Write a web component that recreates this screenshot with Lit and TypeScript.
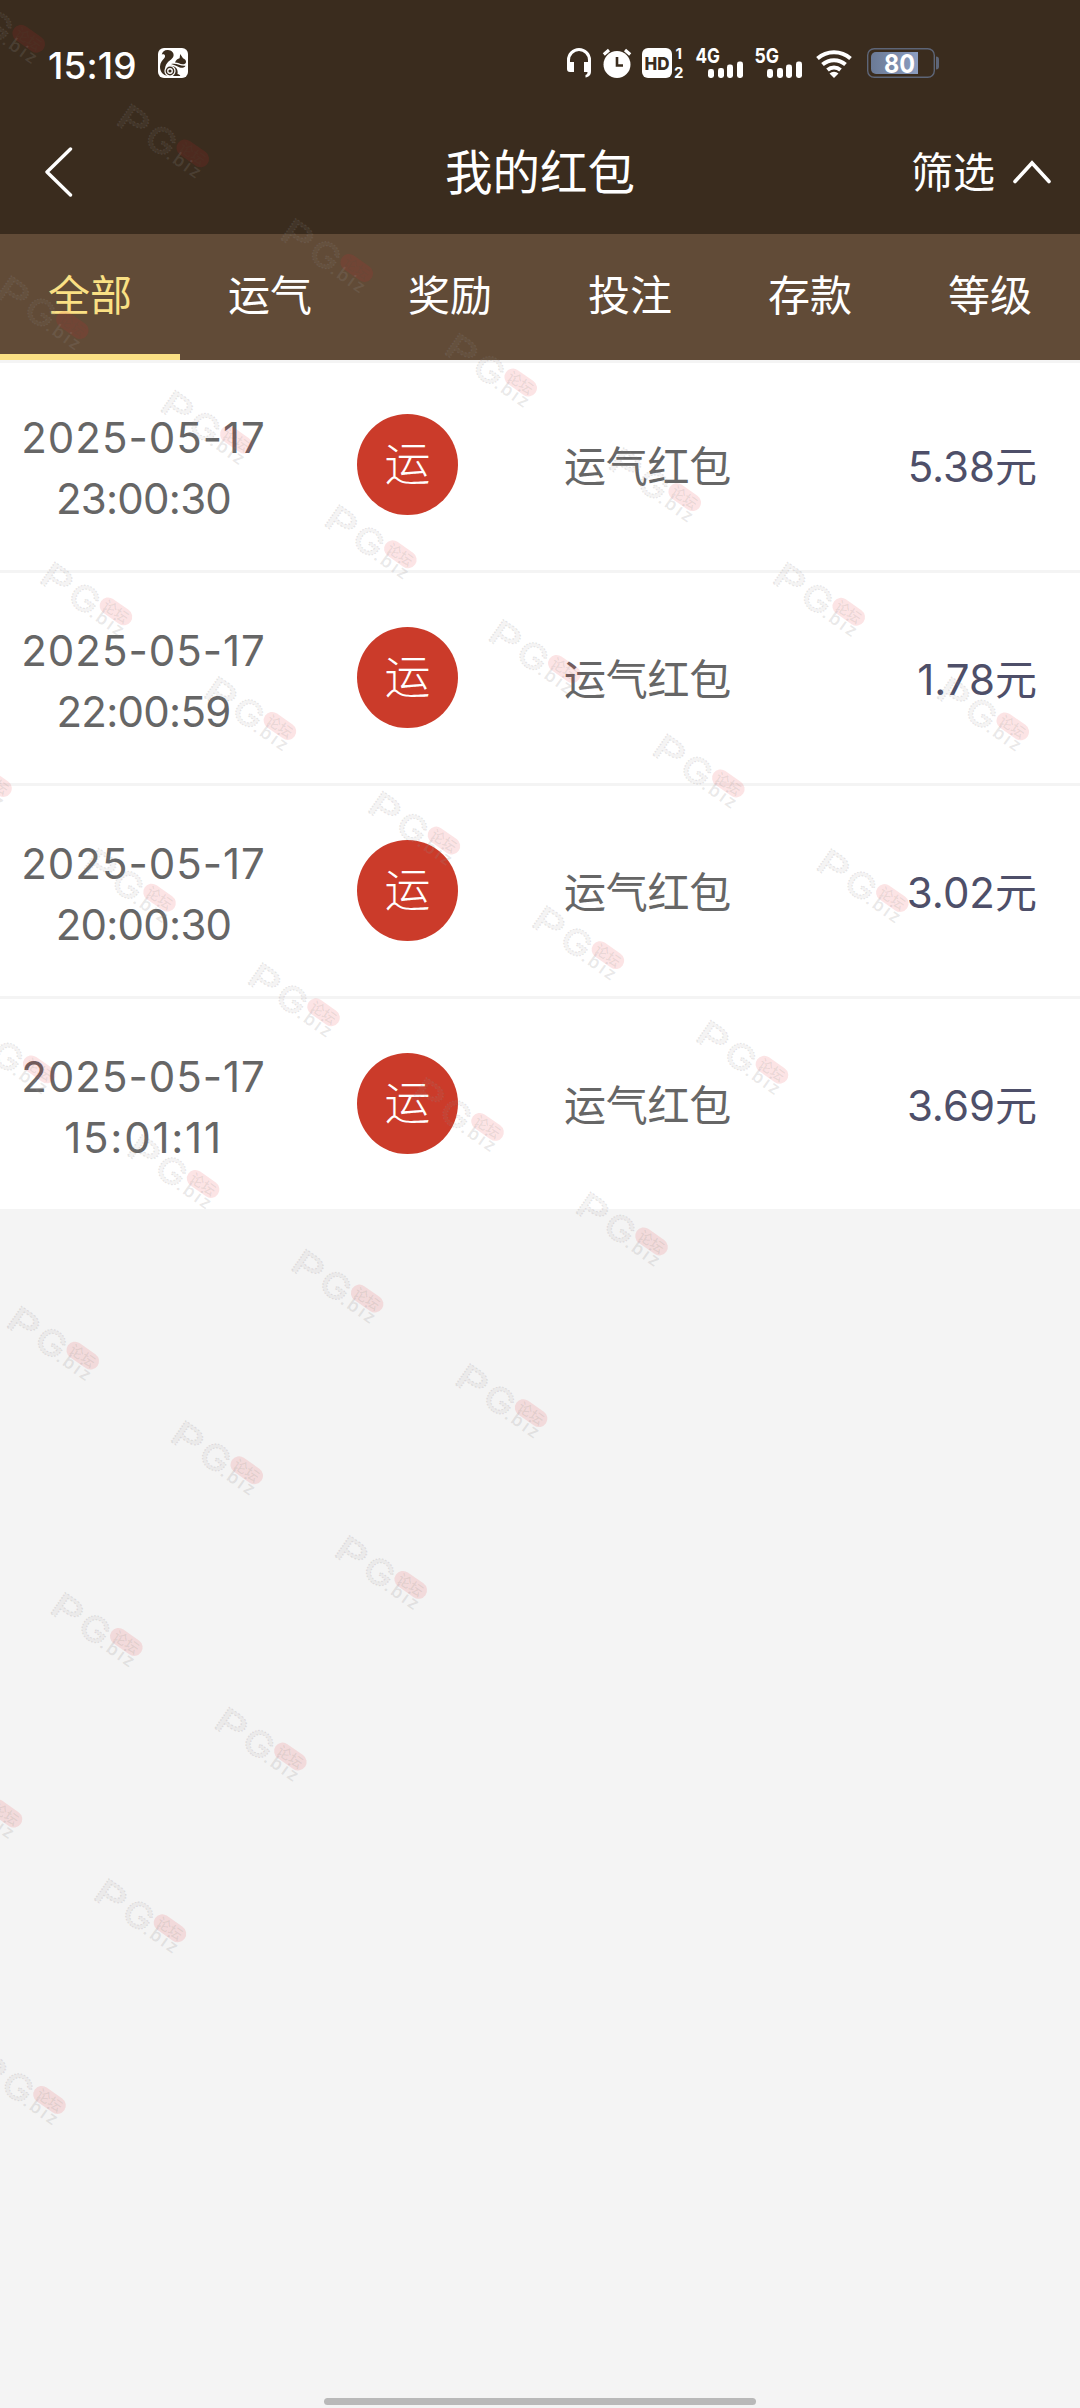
import { LitElement, html, css, svg } from "lit";
import { customElement, property, state } from "lit/decorators.js";
import { classMap } from "lit/directives/class-map.js";
import { styleMap } from "lit/directives/style-map.js";

interface Packet {
  date: string;
  time: string;
  tag: string;
  name: string;
  amount: string;
}

const FONT = css`Inter, "Noto Sans CJK SC", sans-serif`;

/** Opens up the spacing of strings with many narrow "1" digits. */
const tracking = (text: string, base: number) => {
  const ones = text.split("1").length - 1;
  return styleMap({ letterSpacing: `${(base + ones * 0.62).toFixed(2)}px` });
};

@customElement("status-bar")
class StatusBar extends LitElement {
  static styles = css`
    :host { display: flex; align-items: center; height: 126px; color: #fff; font-family: ${FONT}; }
    svg { display: block; flex: none; overflow: visible; }
    .time { width: 91px; margin-left: 48px; font-size: 37px; line-height: 44px; font-weight: 500; letter-spacing: 0.1px; padding-top: 5px; }
    .uc { margin-left: 19px; }
    .right { margin-left: auto; margin-right: 141px; display: flex; }
    .label { font: 700 20.5px Inter, sans-serif; fill: #fff; }
    .small { font: 700 15px Inter, sans-serif; fill: #fff; }
    .level { font: 700 26px Inter, sans-serif; fill: #fff; }
    .hd { font: 800 18px Inter, sans-serif; fill: #3a2c1e; }
  `;

  private signal(label: string) {
    return svg`
      <text class="label" x="-0.5" y="15" textLength="24.5" lengthAdjust="spacingAndGlyphs">${label}</text>
      <rect x="12" y="21" width="6" height="9" rx="2.4" fill="#fff"/>
      <rect x="22" y="20" width="6" height="10" rx="2.4" fill="#fff"/>
      <rect x="31" y="16.500" width="6" height="13.500" rx="2.400" fill="#fff"/>
      <rect x="41" y="13.500" width="6" height="16.500" rx="2.400" fill="#fff"/>`;
  }

  render() {
    return html`
      <span class="time">15:19</span>
      <svg class="uc" width="30" height="30" viewBox="0 0 30 30">
        <rect width="30" height="30" rx="6" fill="#fff"/>
        <g fill="#3a2c1e">
          <path d="M3.800 6.500C4.200 3.500 7 1.700 10 2c3.500.3 5.800 2.500 5.600 5.300-.3 3.400-3.600 4.700-6 7.200-2.300 2.500-2.900 5.500-2.200 8.500.4 2 1.400 3.500 2.600 4.800C5 27.500 1.800 23.500 2 18.500c.2-4 2.300-6 4-8 1.200-1.500 1.400-3 .5-3.800-.7-.7-1.800-.6-2.700-.2z"/>
          <path d="M17 14.500c1-2.700 2.800-3.900 4.600-4.300L22.200 6l2.800 4.300c2 .8 3 2.200 3 3.700 0 1.600-1.500 2.300-3.500 2.300-2.800 0-4.200-1.700-7.500-1.700z"/>
          <path d="M13 16c5.500-1.500 9 2.300 14.500 1.700-.8 1.700-2.600 2.300-4.700 2-3-.4-5-2.700-9.800-3.700z"/>
          <path d="M12.500 17.800c5.500 0 8 4.200 7 8.200 1.500.4 2.500 1 2.800 2h-7.800c2.700-2.200 2.700-7.200-2-10.200z"/>
        </g>
        <circle cx="12" cy="23" r="5.600" fill="#fff"/>
        <circle cx="12" cy="23" r="4.400" fill="#3a2c1e"/>
        <circle cx="12" cy="23" r="2.900" fill="#fff"/>
        <circle cx="12" cy="23" r="1.600" fill="#3a2c1e"/>
      </svg>
      <div class="right">
        <svg width="36" height="30" viewBox="0 0 36 30">
          <path d="M1.500 17V12a10.500 10.500 0 0 1 21 0v5" fill="none" stroke="#fff" stroke-width="3"/>
          <path d="M0 14h7v10H3a3 3 0 0 1-3-3zM17 14h7v9c0 4-2 6-5.500 6.500v-2.500c1.500-.5 2-1.500 2-3H17z" fill="#fff"/>
        </svg>
        <svg width="39" height="30" viewBox="0 0 39 30">
          <circle cx="14" cy="16.500" r="13.500" fill="#fff"/>
          <path d="M.8 6.500 6 2M27.200 6.500 22 2" stroke="#fff" stroke-width="3.200" fill="none"/>
          <path d="M14 9v8.500h6" stroke="#3a2c1e" stroke-width="2.600" fill="none"/>
        </svg>
        <svg width="54" height="30" viewBox="0 0 54 30">
          <rect width="30" height="30" rx="6" fill="#fff"/>
          <text class="hd" x="2.500" y="21.500" textLength="25" lengthAdjust="spacingAndGlyphs">HD</text>
          <text class="small" x="33.500" y="11">1</text>
          <text class="small" x="32" y="29.500">2</text>
        </svg>
        <svg width="59" height="30" viewBox="0 0 59 30">${this.signal("4G")}</svg>
        <svg width="61" height="30" viewBox="0 0 61 30">${this.signal("5G")}</svg>
        <svg width="51" height="30" viewBox="0 0 51 30">
          <g fill="none" stroke="#fff" stroke-width="4">
            <path d="M1.500 10.500a25 25 0 0 1 33 0"/>
            <path d="M6.500 16.500a17.500 17.500 0 0 1 23 0"/>
            <path d="M11.500 22a10 10 0 0 1 13 0"/>
          </g>
          <path d="M13.500 25.500a6.500 6.500 0 0 1 9 0L18 30z" fill="#fff"/>
        </svg>
        <svg width="72" height="30" viewBox="0 0 72 30">
          <defs>
            <linearGradient id="charge"><stop offset="0" stop-color="#6b7a96"/><stop offset="1" stop-color="#8b9dc0"/></linearGradient>
          </defs>
          <rect x=".7" y=".7" width="66.600" height="28.600" rx="6.500" fill="none" stroke="#5d6577" stroke-width="1.400"/>
          <path d="M9 4h42v22H9a5 5 0 0 1-5-5V9a5 5 0 0 1 5-5z" fill="url(#charge)"/>
          <path d="M69 8.500a3 3 0 0 1 3 3v7a3 3 0 0 1-3 3z" fill="#5d6577"/>
          <text class="level" x="17" y="24.500" textLength="31" lengthAdjust="spacingAndGlyphs">80</text>
        </svg>
      </div>`;
  }
}

@customElement("packet-row")
class PacketRow extends LitElement {
  @property({ attribute: false }) packet!: Packet;

  static styles = css`
    :host {
      display: grid; grid-template-columns: 287px 241px 240px 1fr; align-items: center;
      height: 210px; background: #fff; border-bottom: 3px solid #f4f4f4;
      font-family: ${FONT}; font-size: 42px; color: #666;
    }
    .when { text-align: center; line-height: 61px; padding-top: 5px; }
    .when div { white-space: nowrap; }
    .badge {
      justify-self: center; width: 101px; height: 101px; border-radius: 50%; background: #cb3b2a;
      color: #fff; display: flex; align-items: center; justify-content: center;
      font-size: 46px; font-weight: 300; line-height: 1; margin-bottom: 1px;
    }
    .badge span { margin-top: -4px; }
    .name { text-align: center; padding-right: 1px; margin-top: -3px; letter-spacing: -0.2px; }
    .amount { text-align: right; padding-right: 43px; margin-top: -3px; color: #4e4f69; }
  `;

  render() {
    const p = this.packet;
    return html`
      <div class="when">
        <div style=${tracking(p.date, 0.35)}>${p.date}</div>
        <div style=${tracking(p.time, -0.75)}>${p.time}</div>
      </div>
      <div class="badge"><span>${p.tag}</span></div>
      <div class="name">${p.name}</div>
      <div class="amount">${p.amount}</div>`;
  }
}

@customElement("water-mark")
class WaterMark extends LitElement {
  static styles = css`
    :host { display: block; pointer-events: none; }
    svg { display: block; }
    .big { font: 500 35px Inter, sans-serif; fill: rgba(150, 145, 140, 0.09); stroke: rgba(140, 135, 140, 0.2); stroke-width: 1.2; stroke-dasharray: 1.5 1.5; }
    .biz { font: 600 18px "Open Sans", sans-serif; fill: rgba(145, 140, 140, 0.2); }
    .pill { fill: rgba(230, 35, 40, 0.12); }
    .cn { font: 500 14px "Noto Sans CJK SC", sans-serif; fill: rgba(70, 90, 70, 0.1); }
  `;

  render() {
    const marks = [];
    for (let row = 0; row < 9; row++) {
      for (let col = 0; col < 7; col++) {
        const x = -32 + col * 164 - row * 120.4;
        const y = -10.5 + col * 114.6 + row * 171.7;
        if (x < -100 || x > 1090) continue;
        marks.push(svg`
          <g transform=${`translate(${x} ${y}) rotate(35)`}>
            <text class="big" x="-4" y="25.500" textLength="31" lengthAdjust="spacingAndGlyphs">P</text>
            <text class="big" x="30" y="25.500" textLength="30" lengthAdjust="spacingAndGlyphs">G</text>
            <rect class="pill" x="60" y="-3" width="36" height="17" rx="8.500"/>
            <text class="cn" x="64" y="11">论坛</text>
            <text class="biz" x="58" y="25" textLength="37">.biz</text>
          </g>`);
      }
    }
    return html`<svg width="1080" height="2408" viewBox="0 0 1080 2408">${marks}</svg>`;
  }
}

@customElement("app-root")
class AppRoot extends LitElement {
  @state() private active = 0;

  private tabs = ["全部", "运气", "奖励", "投注", "存款", "等级"];
  private packets: Packet[] = [
    { date: "2025-05-17", time: "23:00:30", tag: "运", name: "运气红包", amount: "5.38元" },
    { date: "2025-05-17", time: "22:00:59", tag: "运", name: "运气红包", amount: "1.78元" },
    { date: "2025-05-17", time: "20:00:30", tag: "运", name: "运气红包", amount: "3.02元" },
    { date: "2025-05-17", time: "15:01:11", tag: "运", name: "运气红包", amount: "3.69元" },
  ];

  static styles = css`
    :host {
      display: flex; flex-direction: column; position: relative; overflow: hidden;
      width: 1080px; height: 2408px; background: #f4f4f4; font-family: ${FONT};
    }
    .top { background: #3a2c1e; color: #fff; height: 234px; flex: none; }
    .nav { display: grid; grid-template-columns: 300px 1fr 300px; align-items: center; height: 92px; }
    .nav svg { display: block; }
    .back { padding-left: 44px; }
    .title { text-align: center; font-size: 47.5px; line-height: 60px; padding-top: 2px; }
    .filter { display: flex; align-items: center; justify-content: flex-end; gap: 18px; padding-right: 29px; font-size: 42px; line-height: 60px; }
    .filter span { padding-top: 2px; }
    .tabs {
      display: grid; grid-template-columns: repeat(6, 1fr); height: 126px; flex: none;
      background: #614b37; color: #fff; position: relative; box-shadow: 0 3px 0 #f4f4f4;
    }
    .tab { display: flex; align-items: center; justify-content: center; font-size: 42px; padding-bottom: 4px; border-bottom: 6px solid transparent; }
    .tab.active { color: #fae084; border-bottom-color: #fae084; }
    .home { width: 432px; height: 7px; border-radius: 4px; background: #b9b9b9; margin: auto auto 3px; }
    .overlay { position: absolute; left: 0; top: 0; }
  `;

  render() {
    return html`
      <div class="top">
        <status-bar></status-bar>
        <div class="nav">
          <div class="back">
            <svg width="30" height="50" viewBox="0 0 30 50"><path d="M26.500 2 3 25l23.500 23" fill="none" stroke="#fff" stroke-width="3.400" stroke-linecap="round" stroke-linejoin="round"/></svg>
          </div>
          <div class="title">我的红包</div>
          <div class="filter">
            <span>筛选</span>
            <svg width="38" height="24" viewBox="0 0 38 24"><path d="M2 21.500 19 3l17 18.500" fill="none" stroke="#fff" stroke-width="3.600" stroke-linecap="round"/></svg>
          </div>
        </div>
      </div>
      <div class="tabs">
        ${this.tabs.map(
          (t, i) => html`<div class=${classMap({ tab: true, active: i === this.active })} @click=${() => (this.active = i)}>${t}</div>`
        )}
      </div>
      ${this.packets.map((p) => html`<packet-row .packet=${p}></packet-row>`)}
      <div class="home"></div>
      <water-mark class="overlay"></water-mark>`;
  }
}
